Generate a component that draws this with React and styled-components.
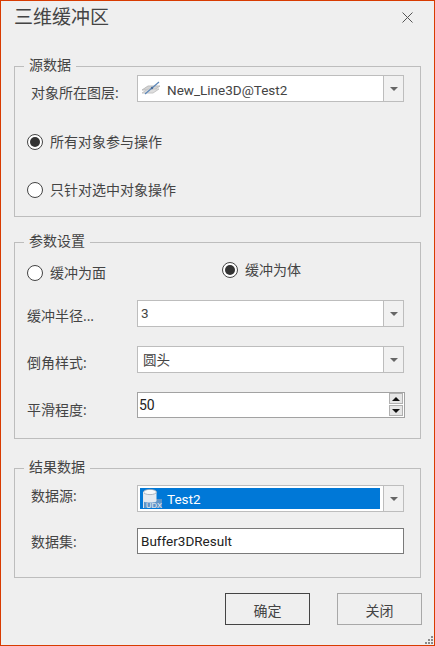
import React from 'react';
import styled, { createGlobalStyle } from 'styled-components';

const GlobalStyle = createGlobalStyle`
  html, body {
    margin: 0;
    padding: 0;
    background: #efefef;
  }
  * {
    box-sizing: border-box;
  }
`;

const Window = styled.div`
  background: #efefef;
  border: 1px solid #d83b01;
  color: #444;
  display: flex;
  flex-direction: column;
  font-family: "Open Sans", "Noto Sans CJK SC", sans-serif;
  font-size: 14px;
  height: 646px;
  padding: 0 13px 0 13px;
  position: relative;
  width: 435px;
`;

const TitleBar = styled.header`
  align-items: center;
  display: flex;
  height: 36px;
  justify-content: space-between;
  padding-bottom: 6px;
`;

const Title = styled.h1`
  color: #444;
  font-size: 19px;
  font-weight: 400;
  margin: 0;
`;

const CloseButton = styled.button`
  background: none;
  border: 0;
  display: flex;
  margin: 2px 8px 0 0;
  padding: 0;
`;

const Group = styled.section`
  border: 1px solid #bdbdbd;
  display: flex;
  flex-direction: column;
  height: ${p => p.$height}px;
  margin-top: ${p => p.$top}px;
  padding: ${p => p.$padTop}px 16px 0 12px;
  position: relative;
  width: 407px;
`;

const Legend = styled.span`
  background: #efefef;
  left: 9px;
  line-height: 18px;
  padding: 0 5px;
  position: absolute;
  top: -11px;
`;

const FieldRow = styled.div`
  align-items: center;
  display: flex;
  height: 27px;
  margin-top: ${p => p.$top || 0}px;
`;

const FieldLabel = styled.label`
  flex: none;
  line-height: 18px;
  padding-left: ${p => (p.$indent ? 4 : 0)}px;
  position: relative;
  top: ${p => p.$shift || 0}px;
  width: 110px;
`;

const Combo = styled.div`
  background: #fff;
  border: 1px solid #bdbdbd;
  display: flex;
  flex: 1;
  height: 27px;
`;

const ComboValue = styled.div`
  align-items: center;
  color: #444;
  display: flex;
  flex: 1;
  font-family: Roboto, "Noto Sans CJK SC", sans-serif;
  font-size: 13.5px;
  gap: ${p => (p.$icon ? 6 : 0)}px;
  padding-bottom: 2px;
  padding-left: ${p => p.$pad || 3}px;
`;

const LayerName = styled.span`
  padding-top: 4px;
`;

const Selection = styled.div`
  align-items: center;
  background: #0078d7;
  color: #fff;
  display: flex;
  flex: 1;
  font-family: Roboto, sans-serif;
  font-size: 13.5px;
  gap: 4px;
  margin: 2px 3px 2px 2px;
  padding-left: 3px;
`;

const ComboArrow = styled.div`
  align-items: center;
  border-left: 1px solid #bdbdbd;
  background: #f1f1f1;
  display: flex;
  flex: none;
  justify-content: center;
  width: 20px;

  &::after {
    border-left: 4px solid transparent;
    border-right: 4px solid transparent;
    border-top: 4px solid #666;
    content: '';
  }
`;

const Spinner = styled.div`
  align-items: center;
  background: #fff;
  border: 1px solid #a2a2a2;
  color: #222;
  display: flex;
  flex: 1;
  height: 26px;
  margin-right: -1px;
  padding: 0 1px 0 1px;
`;

const SpinnerValue = styled.span`
  flex: 1;
  font-family: Roboto, sans-serif;
`;

const SpinnerButtons = styled.div`
  display: flex;
  flex-direction: column;
  gap: 1px;
  width: 14px;
`;

const SpinnerButton = styled.div`
  align-items: center;
  background: #e6e6e6;
  border: 1px solid #b0b0b0;
  display: flex;
  height: 11px;
  justify-content: center;

  &::after {
    border-left: 4px solid transparent;
    border-right: 4px solid transparent;
    ${p => (p.$down ? 'border-top: 4px solid #111;' : 'border-bottom: 4px solid #111;')}
    content: '';
  }
`;

const TextInput = styled.div`
  align-items: center;
  background: #fff;
  border: 1px solid #7a7a7a;
  color: #222;
  display: flex;
  flex: 1;
  font-family: Roboto, sans-serif;
  font-size: 13.5px;
  height: 26px;
  padding-left: 3px;
`;

const RadioRow = styled.label`
  align-items: center;
  display: flex;
  gap: 7px;
  height: 18px;
  margin-top: ${p => p.$top || 0}px;
  position: relative;
  top: ${p => p.$shift || 0}px;
`;

const RadioText = styled.span`
  padding-bottom: 2px;
`;

const RadioDot = styled.span`
  align-items: center;
  background: #fff;
  border: 1px solid #444;
  border-radius: 50%;
  display: flex;
  flex: none;
  height: 16px;
  justify-content: center;
  width: 16px;

  &::after {
    background: #333;
    border-radius: 50%;
    content: '';
    display: ${p => (p.$checked ? 'block' : 'none')};
    height: 10px;
    width: 10px;
  }
`;

const RadioPair = styled.div`
  display: flex;
  margin-top: ${p => p.$top || 0}px;
`;

const RadioSlot = styled.div`
  flex: none;
  width: 195px;
`;

const Footer = styled.footer`
  display: flex;
  gap: 27px;
  justify-content: flex-end;
  margin-right: -1px;
  margin-top: 15px;
`;

const Button = styled.button`
  background: transparent;
  border: 1px solid ${p => (p.$primary ? '#444' : '#a8a8a8')};
  color: #444;
  font-family: inherit;
  font-size: 14px;
  height: 32px;
  padding: 2px 0 0;
  width: 85px;
`;

const Grip = styled.svg`
  bottom: 0;
  position: absolute;
  right: 0;
`;

const LineLayerIcon = () => (
  <svg width="20" height="16" viewBox="0 0 20 16" fill="none">
    <path d="M1 10 L7 6 L19 6 L13 10 Z" fill="#d4d4d4" stroke="#bdbdbd" />
    <path d="M1 13 L7 9 L18 9 L12 13 Z" fill="#dedede" stroke="#c6c6c6" />
    <path d="M4 14 L18 2" stroke="#5b86b8" strokeWidth="1.2" />
    <circle cx="11" cy="8" r="1.2" fill="#4a6f9c" />
  </svg>
);

const DatasourceIcon = () => (
  <svg width="20" height="21" viewBox="0 0 20 21" fill="none">
    <path d="M0 4 V20 H19 V11 H13 V4 Z" fill="#5f95c8" />
    <path d="M.5 4 V13 C.5 15 13.5 15 13.5 13 V4 Z" fill="#e3e9f0" />
    <ellipse cx="7" cy="4" rx="6.5" ry="2.6" fill="#f6f8fa" stroke="#9aa6b4" strokeWidth="0.8" />
    <path d="M.5 4 V20" stroke="#dfe5ec" strokeWidth="1" />
    <text
      x="3"
      y="20"
      fill="#eef2f6"
      fontFamily="'Liberation Sans', sans-serif"
      fontSize="8"
      textLength="16"
      lengthAdjust="spacingAndGlyphs"
    >
      UDX
    </text>
  </svg>
);

const App = () => (
  <Window>
    <GlobalStyle />
    <TitleBar>
      <Title>三维缓冲区</Title>
      <CloseButton aria-label="关闭">
        <svg width="11" height="11" viewBox="0 0 11 11">
          <path d="M.5.5l10 10M10.5.5l-10 10" stroke="#555" strokeWidth="1" fill="none" />
        </svg>
      </CloseButton>
    </TitleBar>

    <Group $top={29} $height={151} $padTop={8}>
      <Legend>源数据</Legend>
      <FieldRow>
        <FieldLabel $indent $shift={4}>对象所在图层:</FieldLabel>
        <Combo>
          <ComboValue $icon>
            <LineLayerIcon />
            <LayerName>New_Line3D@Test2</LayerName>
          </ComboValue>
          <ComboArrow />
        </Combo>
      </FieldRow>
      <RadioRow $top={31}>
        <RadioDot $checked />
        <RadioText>所有对象参与操作</RadioText>
      </RadioRow>
      <RadioRow $top={30}>
        <RadioDot />
        <RadioText>只针对选中对象操作</RadioText>
      </RadioRow>
    </Group>

    <Group $top={25} $height={197} $padTop={21}>
      <Legend>参数设置</Legend>
      <RadioPair>
        <RadioSlot>
          <RadioRow>
            <RadioDot />
            <RadioText>缓冲为面</RadioText>
          </RadioRow>
        </RadioSlot>
        <RadioSlot>
          <RadioRow $shift={-3}>
            <RadioDot $checked />
            <RadioText>缓冲为体</RadioText>
          </RadioRow>
        </RadioSlot>
      </RadioPair>
      <FieldRow $top={18}>
        <FieldLabel $shift={2}>缓冲半径...</FieldLabel>
        <Combo>
          <ComboValue>3</ComboValue>
          <ComboArrow />
        </Combo>
      </FieldRow>
      <FieldRow $top={19}>
        <FieldLabel $shift={3}>倒角样式:</FieldLabel>
        <Combo>
          <ComboValue $pad={5}>圆头</ComboValue>
          <ComboArrow />
        </Combo>
      </FieldRow>
      <FieldRow $top={18}>
        <FieldLabel $shift={5}>平滑程度:</FieldLabel>
        <Spinner>
          <SpinnerValue>50</SpinnerValue>
          <SpinnerButtons>
            <SpinnerButton />
            <SpinnerButton $down />
          </SpinnerButtons>
        </Spinner>
      </FieldRow>
    </Group>

    <Group $top={29} $height={110} $padTop={16}>
      <Legend>结果数据</Legend>
      <FieldRow>
        <FieldLabel $indent $shift={-3}>数据源:</FieldLabel>
        <Combo>
          <Selection>
            <DatasourceIcon />
            <span>Test2</span>
          </Selection>
          <ComboArrow />
        </Combo>
      </FieldRow>
      <FieldRow $top={15}>
        <FieldLabel $indent $shift={1}>数据集:</FieldLabel>
        <TextInput>Buffer3DResult</TextInput>
      </FieldRow>
    </Group>

    <Footer>
      <Button $primary>确定</Button>
      <Button>关闭</Button>
    </Footer>

    <Grip width="9" height="9" viewBox="0 0 9 9" fill="#8a8a8a">
      <rect x="6" y="0" width="2" height="2" />
      <rect x="3" y="3" width="2" height="2" />
      <rect x="6" y="3" width="2" height="2" />
      <rect x="0" y="6" width="2" height="2" />
      <rect x="3" y="6" width="2" height="2" />
      <rect x="6" y="6" width="2" height="2" />
    </Grip>
  </Window>
);

export default App;
